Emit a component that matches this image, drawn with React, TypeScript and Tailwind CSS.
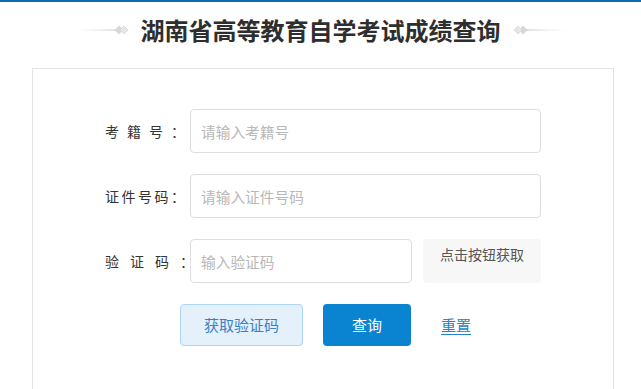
import React from "react";

const Ornament = ({ flip }: { flip?: boolean }) => (
  <svg
    width="54"
    height="12"
    viewBox="0 0 54 12"
    className={flip ? "-scale-x-100" : ""}
  >
    <defs>
      <linearGradient id={flip ? "lnR" : "lnL"} x1="0" x2="1" y1="0" y2="0">
        <stop offset="0" stopColor="#e2e2e2" stopOpacity="0" />
        <stop offset="1" stopColor="#d4d4d4" />
      </linearGradient>
    </defs>
    <rect x="0" y="5.3" width="42" height="1.4" fill={`url(#${flip ? "lnR" : "lnL"})`} />
    <path d="M44 1.5 L48.5 6 L44 10.5 L39.5 6 Z" fill="#d8d8d8" />
    <path d="M49 2 L53 6 L49 10 L45 6 Z" fill="#e6e6e6" stroke="#d8d8d8" strokeWidth="0.8" />
  </svg>
);

const Row = ({
  label,
  tracking,
  children,
}: {
  label: string;
  tracking: string;
  children: React.ReactNode;
}) => (
  <div className="flex items-center h-[44px]">
    <span className={`w-[85px] text-[14px] text-[#333] whitespace-nowrap ${tracking}`}>
      {label}
    </span>
    {children}
  </div>
);

const inputCls =
  "h-[44px] border border-[#dedede] rounded-[4px] px-[10px] text-[14.7px] text-[#333] placeholder:text-[#b8b8b8] outline-none bg-white";

export default function App() {
  return (
    <div className="w-[641px] h-[389px] overflow-hidden bg-white font-['Noto_Sans_CJK_SC',_'Noto_Sans',_sans-serif]">
      <div className="h-[2px] bg-[#0b6cb5]" />

      {/* heading */}
      <div className="flex items-center justify-center gap-[12px] h-[36px] mt-[10px]">
        <Ornament />
        <h1 className="text-[24px] leading-[36px] font-bold text-[#2e2e2e] whitespace-nowrap">
          湖南省高等教育自学考试成绩查询
        </h1>
        <Ornament flip />
      </div>

      {/* form card */}
      <div className="ml-[32px] mt-[20px] w-[582px] h-[340px] border border-[#e3e3e3] pt-[40px] pl-[72px]">
        <div className="flex flex-col gap-[21px]">
          <Row label="考籍号：" tracking="tracking-[8px]">
            <input className={`${inputCls} w-[351px]`} placeholder="请输入考籍号" />
          </Row>
          <Row label="证件号码：" tracking="tracking-[2.5px]">
            <input className={`${inputCls} w-[351px]`} placeholder="请输入证件号码" />
          </Row>
          <Row label="验证码：" tracking="tracking-[11px]">
            <input className={`${inputCls} w-[222px]`} placeholder="输入验证码" />
            <div className="ml-[11px] w-[118px] h-[44px] rounded-[4px] bg-[#f7f7f7] text-[14px] text-[#555] text-center pt-[5px]">
              点击按钮获取
            </div>
          </Row>

          <div className="flex items-center ml-[75px]">
            <button className="w-[123px] h-[42px] rounded-[4px] border border-[#add6f2] bg-[#e4f0fa] text-[15px] text-[#3a80c6]">
              获取验证码
            </button>
            <button className="ml-[20px] w-[88px] h-[42px] rounded-[4px] bg-[#0a84d0] text-[15px] text-white">
              查询
            </button>
            <a className="ml-[30px] text-[15px] text-[#2282cf] underline underline-offset-[3px]">
              重置
            </a>
          </div>
        </div>
      </div>
    </div>
  );
}
